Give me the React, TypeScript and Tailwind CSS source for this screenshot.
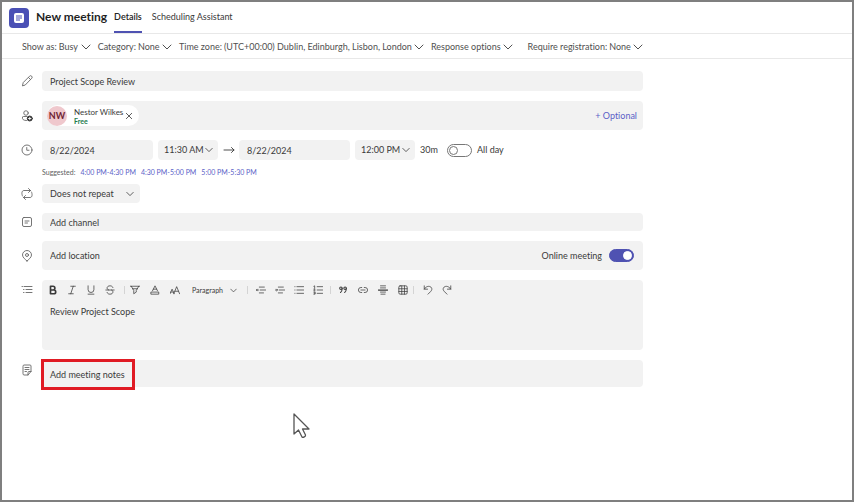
import type { ReactNode } from 'react'
import { useState } from 'react'

interface IconProps {
  children: ReactNode
  className?: string
}

function Icon({ children, className = 'size-3' }: IconProps) {
  return (
    <svg
      viewBox="0 0 24 24"
      fill="none"
      stroke="currentColor"
      strokeWidth="1.8"
      strokeLinecap="round"
      strokeLinejoin="round"
      aria-hidden="true"
      className={`shrink-0 ${className}`}
    >
      {children}
    </svg>
  )
}

function Chevron({ className = 'size-2' }: { className?: string }) {
  return (
    <svg
      viewBox="0 0 10 10"
      fill="none"
      stroke="currentColor"
      strokeLinecap="round"
      strokeLinejoin="round"
      aria-hidden="true"
      className={`pointer-events-none shrink-0 ${className}`}
    >
      <path d="M1 3l4 4 4-4" />
    </svg>
  )
}

interface OptionMenuProps {
  label: string
  value: string
}

function OptionMenu({ label, value }: OptionMenuProps) {
  return (
    <label className="flex items-center whitespace-nowrap">
      {label}
      <select className="ml-0.5 appearance-none bg-transparent">
        <option>{value}</option>
      </select>
      <Chevron className="ml-0.5 size-[10px]" />
    </label>
  )
}

interface RowProps {
  icon: ReactNode
  children: ReactNode
  top?: boolean
}

function Row({ icon, children, top }: RowProps) {
  return (
    <div className={`flex ${top ? 'items-start' : 'items-center'}`}>
      <div className={`flex w-10 shrink-0 justify-center pl-[9px] text-[#666] ${top ? 'pt-1' : ''}`}>{icon}</div>
      <div className="min-w-0 flex-1">{children}</div>
    </div>
  )
}

const tools = [
  {
    className: 'w-[19px]',
    items: [
      { name: 'Bold', icon: <path strokeWidth="4" d="M6 3h6a4 4 0 0 1 0 9H6zM6 12h8a4 4 0 0 1 0 9H6z" /> },
      { name: 'Italic', icon: <path d="M9 3h11M4 21h11M15 3L9 21" /> },
      { name: 'Underline', icon: <path d="M5 2v9a7 7 0 0 0 14 0V2M5 22h14" /> },
      { name: 'Strikethrough', icon: <path d="M19 6c-1-3-4-4-7-4-4 0-7 2-7 5 0 2 1 4 4 5M2 12h20M5 18c1 3 4 4 7 4 4 0 7-2 7-5 0-2-1-4-3-5" /> },
    ],
  },
  {
    className: 'w-5',
    items: [
      { name: 'Highlight', icon: <path d="M1 3h22M3 3l6 10v8l6-4v-4l6-10M6 9h12" /> },
      { name: 'Font color', icon: <path d="M6 14l6-12 6 12M8 10h8M3 17h18v5H3z" /> },
      { name: 'Font size', icon: <path d="M0 21l5-11 5 11M2 17h6M9 21l7-17 7 17M12 15h8" /> },
    ],
  },
  {
    className: 'w-[19px]',
    items: [
      { name: 'Decrease indent', icon: <path d="M8 5h12M10 12h13M8 19h10M6 12H1M3 10l-2 2 2 2" /> },
      { name: 'Increase indent', icon: <path d="M8 5h12M10 12h13M8 19h10M1 12h5M4 10l2 2-2 2" /> },
      { name: 'Bulleted list', icon: <path d="M7 4h16M7 12h16M7 20h16M2 4h.5M2 12h.5M2 20h.5" /> },
      { name: 'Numbered list', icon: <path d="M10 4h13M10 12h13M10 20h13M2 3l2-1v6M2 10h3l-3 4h3M2 17h3v5H2M3 19.500h2" /> },
    ],
  },
  {
    className: 'w-5',
    items: [
      {
        name: 'Quote',
        icon: (
          <>
            <circle cx="7" cy="8" r="3" strokeWidth="2.500" />
            <circle cx="17" cy="8" r="3" strokeWidth="2.500" />
            <path strokeWidth="2.500" d="M10 8c0 5-1 8-4 10M20 8c0 5-1 8-4 10" />
          </>
        ),
      },
      { name: 'Link', icon: <path d="M9 6H7a6 6 0 0 0 0 12h2M15 6h2a6 6 0 0 1 0 12h-2M7 12h10" /> },
      {
        name: 'Horizontal rule',
        icon: (
          <>
            <path d="M6 2h12M6 7h12M6 17h12M7 22h10" />
            <path strokeWidth="3" d="M1 12h22" />
          </>
        ),
      },
      {
        name: 'Table',
        icon: (
          <>
            <rect x="2" y="2" width="20" height="20" rx="3" />
            <path d="M9 2v20M15.500 2v20M2 9h20M2 15.500h20" />
          </>
        ),
      },
    ],
  },
  {
    className: 'w-[19px]',
    items: [
      { name: 'Undo', icon: <path d="M3 2v8h8M3 10c5-8 12-8 16-5 4 4 2 8-1 11l-6 6" /> },
      { name: 'Redo', icon: <path d="M21 2v8h-8M21 10c-5-8-12-8-16-5-4 4-2 8 1 11l6 6" /> },
    ],
  },
]

function ToolGroup({ index }: { index: number }) {
  const group = tools[index]
  return (
    <div className="flex">
      {group.items.map(tool => (
        <button
          key={tool.name}
          type="button"
          aria-label={tool.name}
          className={`flex h-5 items-center justify-center ${group.className}`}
        >
          <Icon className="size-[10px]">{tool.icon}</Icon>
        </button>
      ))}
    </div>
  )
}

function Divider() {
  return <span className="h-2 w-px bg-[#d4d4d4]" />
}

interface SwitchProps {
  label: string
  checked: boolean
  onChange: (checked: boolean) => void
}

function Switch({ label, checked, onChange }: SwitchProps) {
  return (
    <input
      type="checkbox"
      role="switch"
      aria-label={label}
      checked={checked}
      onChange={e => onChange(e.target.checked)}
      className="flex h-[13px] w-[25px] shrink-0 appearance-none items-center rounded-full border border-[#777] bg-white px-px before:size-[9px] before:rounded-full before:border before:border-[#777] before:bg-white checked:justify-end checked:border-[#4f52b2] checked:bg-[#4f52b2] checked:before:border-white"
    />
  )
}

function TimeSelect({ label, value }: { label: string, value: string }) {
  return (
    <div className="flex h-5 w-[60px] shrink-0 items-center justify-between rounded-sm bg-[#f2f2f2] pr-[5px] pl-[6px]">
      <select aria-label={label} className="appearance-none bg-transparent">
        <option>{value}</option>
      </select>
      <Chevron />
    </div>
  )
}

const suggestions = ['4:00 PM-4:30 PM', '4:30 PM-5:00 PM', '5:00 PM-5:30 PM']

export default function App() {
  const [allDay, setAllDay] = useState(false)
  const [online, setOnline] = useState(true)

  return (
    <div className="relative min-h-screen border-2 border-[#7f7f7f] bg-white font-['Lato','Noto_Sans',sans-serif] text-[9px] leading-3 text-[#3a3a3a] [font-variant-ligatures:none]">
      <header className="flex h-8 items-center border-b border-[#e8e8e8] pl-[7px]">
        <span className="flex size-5 items-center justify-center rounded-sm bg-[#4a50b5] text-white">
          <svg viewBox="0 0 12 12" className="size-3" aria-hidden="true">
            <rect x="1" y="1" width="10" height="10" rx="2" fill="currentColor" />
            <path d="M3 4h6M3 6h6M3 8h4" stroke="#4a50b5" />
          </svg>
        </span>
        <h1 className="ml-[7px] pb-0.5 text-[12px] leading-4 font-bold text-[#1f1f1f]">New meeting</h1>
        <nav className="ml-[7px] flex h-full gap-[10px]">
          <a href="#details" className="flex items-center border-b-2 border-[#4f52b2] font-semibold text-[#242424]">Details</a>
          <a href="#scheduling" className="flex items-center pb-0.5">Scheduling Assistant</a>
        </nav>
      </header>

      <div className="flex h-[25px] items-center gap-[7px] border-b border-[#e8e8e8] pt-0.5 pl-5 text-[#505050]">
        <OptionMenu label="Show as:" value="Busy" />
        <OptionMenu label="Category:" value="None" />
        <OptionMenu label="Time zone:" value="(UTC+00:00) Dublin, Edinburgh, Lisbon, London" />
        <button type="button" className="flex items-center whitespace-nowrap">
          Response options
          <Chevron className="ml-0.5 size-[10px]" />
        </button>
        <div className="ml-2">
          <OptionMenu label="Require registration:" value="None" />
        </div>
      </div>

      <main className="flex w-full max-w-[641px] flex-col gap-[10px] pt-3">
        <Row icon={<Icon><path d="M3 21l1.500-6L17 2.500a2.500 2.500 0 0 1 4.500 4L9 19.500zM15 5l4 4" /></Icon>}>
          <input aria-label="Title" defaultValue="Project Scope Review" className="block h-5 w-full rounded-sm bg-[#f2f2f2] px-2" />
        </Row>

        <Row
          icon={(
            <Icon>
              <circle cx="10" cy="6" r="4.500" />
              <path d="M11 21c-6 0-9-2-8-7 0-1 1-1 2-1h7" />
              <circle cx="17.500" cy="17" r="5" fill="#333" stroke="#333" />
              <path stroke="white" d="M17.500 14.500v5M15 17h5" />
            </Icon>
          )}
        >
          <div className="flex h-[29px] items-center justify-between rounded-sm bg-[#f2f2f2] pr-[6px] pl-[5px]">
            <div className="flex h-[21px] items-center rounded-full bg-white pr-[6px]">
              <span className="flex size-5 items-center justify-center rounded-full bg-[#efc8cd] font-bold text-[#6e2233]">NW</span>
              <span className="ml-[7px] flex flex-col text-[8px] leading-[10px]">
                Nestor Wilkes
                <span className="text-[7px] leading-2 font-bold text-[#237b4b]">Free</span>
              </span>
              <button type="button" aria-label="Remove Nestor Wilkes" className="ml-0.5">
                <Icon className="size-2"><path strokeWidth="2.500" d="M4 4l16 16M20 4L4 20" /></Icon>
              </button>
            </div>
            <button type="button" className="text-[#5b5fc7]">+ Optional</button>
          </div>
        </Row>

        <Row
          top
          icon={(
            <Icon>
              <circle cx="12" cy="12" r="10" />
              <path d="M11.500 7v5.500H16" />
            </Icon>
          )}
        >
          <div className="flex items-center">
            <input aria-label="Start date" defaultValue="8/22/2024" className="h-5 w-[111px] min-w-0 rounded-sm bg-[#f2f2f2] px-2" />
            <div className="ml-[5px]"><TimeSelect label="Start time" value="11:30 AM" /></div>
            <Icon className="ml-[5px] mr-1 size-3"><path d="M2 12h20M17 7l5 5-5 5" /></Icon>
            <input aria-label="End date" defaultValue="8/22/2024" className="h-5 w-[111px] min-w-0 rounded-sm bg-[#f2f2f2] px-2" />
            <div className="ml-[5px]"><TimeSelect label="End time" value="12:00 PM" /></div>
            <span className="ml-[5px] w-[27px]">30m</span>
            <label className="flex items-center gap-[5px] whitespace-nowrap">
              <Switch label="All day" checked={allDay} onChange={setAllDay} />
              All day
            </label>
          </div>
          <div className="mt-[6px] flex gap-[5px] text-[7px] whitespace-nowrap text-[#606060]">
            Suggested:
            {suggestions.map(time => (
              <button key={time} type="button" className="text-[#5b5fc7]">{time}</button>
            ))}
          </div>
        </Row>

        <div className="-mt-1">
          <Row icon={<Icon><path d="M15 1l4 4-4 4M19 5H6c-5 0-5 7-3 11M9 23l-4-4 4-4M5 19h13c5 0 5-7 3-11" /></Icon>}>
            <div className="flex h-[19px] w-[98px] items-center justify-between rounded-sm bg-[#f2f2f2] pr-[6px] pl-2">
              <select aria-label="Repeat" className="appearance-none bg-transparent">
                <option>Does not repeat</option>
              </select>
              <Chevron />
            </div>
          </Row>
        </div>

        <Row
          icon={(
            <Icon>
              <rect x="3" y="3" width="18" height="18" rx="3" />
              <path d="M8 10h8M8 14h5" />
            </Icon>
          )}
        >
          <input aria-label="Channel" placeholder="Add channel" className="block h-[18px] w-full rounded-sm bg-[#f2f2f2] px-2 placeholder:text-[#3a3a3a]" />
        </Row>

        <Row
          icon={(
            <Icon>
              <path d="M12 22c-3-3-9-7-9-12a9 9 0 0 1 18 0c0 5-6 9-9 12z" />
              <circle cx="12" cy="10" r="3" />
            </Icon>
          )}
        >
          <div className="flex h-[29px] items-center rounded-sm bg-[#f2f2f2] pr-[9px] pl-2">
            <input aria-label="Location" placeholder="Add location" className="min-w-0 flex-1 bg-transparent placeholder:text-[#3a3a3a]" />
            <label className="flex items-center gap-[7px]">
              Online meeting
              <Switch label="Online meeting" checked={online} onChange={setOnline} />
            </label>
          </div>
        </Row>

        <Row top icon={<Icon><path d="M2 5h1M6 5h16M10 11h12M10 17h12M5 11h1M5 17h1" /></Icon>}>
          <div className="rounded-sm bg-[#f2f2f2]">
            <div role="toolbar" aria-label="Formatting" className="flex items-center pl-px">
              <ToolGroup index={0} />
              <span className="flex w-[6px] justify-end"><Divider /></span>
              <ToolGroup index={1} />
              <label className="ml-[7px] flex items-center text-[7px]">
                <select aria-label="Paragraph style" className="w-[38px] appearance-none bg-transparent">
                  <option>Paragraph</option>
                </select>
                <Chevron className="mr-[10px] size-[7px]" />
              </label>
              <Divider />
              <span className="w-[3px]" />
              <ToolGroup index={2} />
              <span className="flex w-[6px] justify-center"><Divider /></span>
              <ToolGroup index={3} />
              <span className="flex w-[5px] justify-start"><Divider /></span>
              <ToolGroup index={4} />
            </div>
            <textarea
              aria-label="Description"
              defaultValue="Review Project Scope"
              className="block h-[50px] w-full resize-none bg-transparent px-2 pt-[6px]"
            />
          </div>
        </Row>

        <Row
          top
          icon={(
            <Icon>
              <path d="M4 4a2 2 0 0 1 2-2h12a2 2 0 0 1 2 2v11l-6 7H6a2 2 0 0 1-2-2zM20 15h-4a2 2 0 0 0-2 2v5M8 7h8M8 11h8M8 15h3" />
            </Icon>
          )}
        >
          <div className="relative h-[27px] rounded-sm bg-[#f2f2f2]">
            <button type="button" className="absolute -top-px -left-px h-[31px] w-[94px] border-3 border-[#e01b24] bg-[#f2f2f2] px-[6px] text-left whitespace-nowrap">
              Add meeting notes
            </button>
          </div>
        </Row>
      </main>

      <svg viewBox="0 0 18 26" className="absolute top-[411px] left-[291px] h-[26px] w-[18px]" aria-hidden="true">
        <path d="M1 1v20l4.500-4 3.500 7c1 1 4-0.500 3.500-2l-3-6H16z" fill="white" stroke="#555" strokeWidth="1.300" strokeLinejoin="round" />
      </svg>
    </div>
  )
}
